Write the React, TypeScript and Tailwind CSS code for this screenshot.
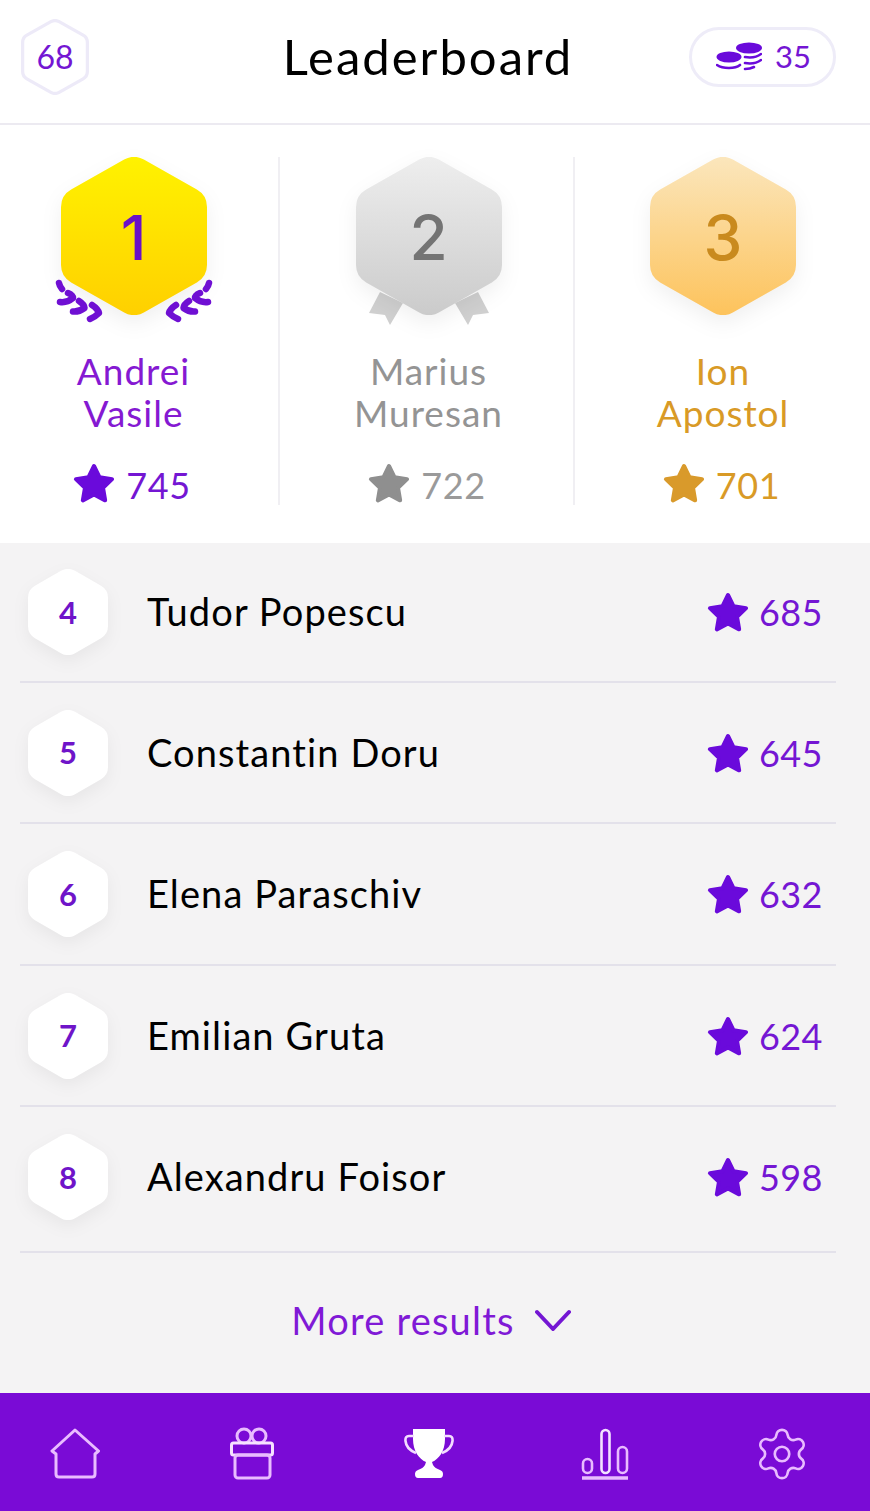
import { Settings } from "lucide-react";

const font = { fontFamily: '"Lato", "Noto Sans", sans-serif' };
const hex = "85,20 138,50 138,108 85,138 32,108 32,50";

function Star({ color, className }: { color: string; className: string }) {
  return (
    <svg viewBox="0 0 44 42" className={className} aria-hidden="true">
      <polygon
        points="22,4 27.58,15.31 40.07,17.13 31.03,25.94 33.17,38.37 22,32.5 10.83,38.37 12.97,25.94 3.93,17.13 16.42,15.31"
        fill={color}
        stroke={color}
        strokeWidth="4"
        strokeLinejoin="round"
      />
    </svg>
  );
}

function Laurel() {
  const leaves = [
    "M10 126 Q10.5 129 13 132",
    "M19 136 Q24 138 24 141 Q18 146 11 145",
    "M30 144 Q35 147 35.5 151 Q30 155 24 154.5",
    "M43 148 Q49 152 50 156 Q46 160 41 162",
  ];
  return (
    <g fill="none" stroke="#6f0fd3" strokeWidth="6.5" strokeLinecap="round" strokeLinejoin="round">
      {leaves.map((d) => (
        <path key={d} d={d} />
      ))}
      <g transform="translate(170,0) scale(-1,1)">
        {leaves.map((d) => (
          <path key={d} d={d} />
        ))}
      </g>
    </g>
  );
}

function Medal({
  id,
  from,
  to,
  rank,
  numberClass,
  ribbon,
  laurel,
}: {
  id: string;
  from: string;
  to: string;
  rank: string;
  numberClass: string;
  ribbon?: boolean;
  laurel?: boolean;
}) {
  return (
    <div className="relative w-[170px] h-[168px] shrink-0">
      <svg viewBox="0 0 170 168" className="absolute inset-0 w-[170px] h-[168px] overflow-visible" aria-hidden="true">
        <defs>
          <linearGradient id={id} gradientUnits="userSpaceOnUse" x1="0" y1="0" x2="0" y2="158">
            <stop offset="0" stopColor={from} />
            <stop offset="1" stopColor={to} />
          </linearGradient>
        </defs>
        {ribbon && (
          <g fill="#d0d0d0">
            <polygon points="36,135 59,146 46,168 41,158 25,156" />
            <polygon points="134,135 111,146 124,168 129,158 145,156" />
          </g>
        )}
        <polygon
          points={hex}
          fill={`url(#${id})`}
          stroke={`url(#${id})`}
          strokeWidth="40"
          strokeLinejoin="round"
          style={{ filter: "drop-shadow(0 8px 10px rgba(0,0,0,0.06))" }}
        />
        {laurel && <Laurel />}
      </svg>
      <div
        style={{ fontFamily: '"Inter", sans-serif' }}
        className={`absolute left-0 right-0 top-[46px] h-[70px] flex items-center justify-center text-[62px] font-medium leading-none ${numberClass}`}
      >
        {rank}
      </div>
    </div>
  );
}

function Podium({
  first,
  last,
  score,
  nameClass,
  scoreClass,
  starColor,
  outerClass,
  medal,
}: {
  first: string;
  last: string;
  score: string;
  nameClass: string;
  scoreClass: string;
  starColor: string;
  outerClass: string;
  medal: React.ReactNode;
}) {
  return (
    <div className={`h-[348px] flex flex-col items-center ${outerClass}`}>
      {medal}
      <div className={`mt-[25px] text-[37px] leading-[42px] tracking-[1px] text-center ${nameClass}`}>
        <div>{first}</div>
        <div>{last}</div>
      </div>
      <div className="mt-[31px] flex items-center h-[50px] gap-[10px] pr-[4px]">
        <Star color={starColor} className="w-[44px] h-[42px] -mt-[4px]" />
        <span className={`text-[36px] tracking-[0.6px] leading-none ${scoreClass}`}>{score}</span>
      </div>
    </div>
  );
}

function Row({ rank, name, score, rowClass }: { rank: string; name: string; score: string; rowClass: string }) {
  return (
    <div className={`flex items-center border-b-2 border-[#e3e1ea] pl-2 ${rowClass}`}>
      <div className="relative w-[80px] h-[86px] shrink-0 flex items-center justify-center">
        <svg viewBox="0 0 80 86" className="absolute inset-0 w-[80px] h-[86px] overflow-visible" aria-hidden="true">
          <polygon
            points="40,14 66,29 66,57 40,72 14,57 14,29"
            fill="#ffffff"
            stroke="#ffffff"
            strokeWidth="28"
            strokeLinejoin="round"
            style={{ filter: "drop-shadow(0 6px 8px rgba(0,0,0,0.05))" }}
          />
        </svg>
        <span className="relative text-[31px] font-bold text-[#6f14c9] leading-none">{rank}</span>
      </div>
      <div className="ml-[39px] -mt-[2px] text-[38px] tracking-[1.1px] text-black leading-none flex-1 whitespace-nowrap">{name}</div>
      <div className="w-[130px] shrink-0 flex items-center gap-[9px]">
        <Star color="#6a0adb" className="w-[44px] h-[42px]" />
        <span className="text-[36px] tracking-[0.4px] leading-none text-[#7416d3]">{score}</span>
      </div>
    </div>
  );
}

function Coins() {
  return (
    <svg viewBox="0 0 46 30" className="w-[46px] h-[30px]" aria-hidden="true">
      <g fill="#6a0adb">
        <ellipse cx="33" cy="6" rx="13" ry="5.5" />
        <ellipse cx="13" cy="15" rx="12.5" ry="5.5" />
      </g>
      <g fill="none" stroke="#6a0adb" strokeWidth="2.6" strokeLinecap="round">
        <path d="M29 15 C35 16 41 15 45 12" />
        <path d="M29 21 C35 22 41 21 45 18" />
        <path d="M29 27 C33 27 36 26 38 25" />
        <path d="M1 23 C7 27 19 27 24 23" />
      </g>
    </svg>
  );
}

function Home() {
  return (
    <svg viewBox="0 0 50 52" className="w-[50px] h-[52px]" fill="none" stroke="#e9bcff" strokeWidth="3" strokeLinejoin="round" aria-hidden="true">
      <path d="M25 2 L48.5 23 L45 26 V46 Q45 49 42 49 H9 Q6 49 6 46 V26 L2 23 Z" />
    </svg>
  );
}

function Gift() {
  return (
    <svg viewBox="0 0 50 54" className="w-[50px] h-[54px]" fill="none" stroke="#e9bcff" strokeWidth="3" strokeLinejoin="round" aria-hidden="true">
      <circle cx="17" cy="9" r="7" />
      <circle cx="32" cy="9" r="7" />
      <rect x="4.5" y="16" width="41" height="12" rx="2" stroke="#f6e2ff" />
      <rect x="8" y="28" width="35" height="23" rx="3" />
    </svg>
  );
}

function Trophy() {
  return (
    <svg viewBox="0 0 50 50" className="w-[50px] h-[50px]" aria-hidden="true">
      <path
        d="M9 0 H41 V10 C41 22 35 30 28 33 L29 36 C30 38 33 40 36 41 Q39 42 39 45 Q39 49 36 49 H14 Q11 49 11 45 Q11 42 14 41 C17 40 20 38 21 36 L22 33 C15 30 9 22 9 10 Z"
        fill="#ffffff"
      />
      <path
        d="M10 7 H5 Q1 7 1.5 12 C2 18 7 22 12 24 M40 7 H45 Q49 7 48.5 12 C48 18 43 22 38 24"
        fill="none"
        stroke="#f3dcff"
        strokeWidth="2.6"
        strokeLinejoin="round"
      />
    </svg>
  );
}

function Chart() {
  return (
    <svg viewBox="0 0 48 52" className="w-[48px] h-[52px]" fill="none" stroke="#e9bcff" strokeWidth="2.6" aria-hidden="true">
      <rect x="2" y="31" width="9" height="14" rx="4.5" />
      <rect x="20.5" y="2" width="8" height="43" rx="4" stroke="#f3e2ff" />
      <rect x="37" y="19" width="9" height="26" rx="4.5" />
      <path d="M1 50 H47" strokeWidth="3.4" />
    </svg>
  );
}

export default function App() {
  const navIcon = "w-[50px] flex items-center justify-center";
  return (
    <div style={font} className="w-full h-[1511px] overflow-hidden bg-white flex flex-col">
      <header className="h-[125px] shrink-0 border-b-2 border-[#eceaf1] flex items-center pl-5 pr-[34px] pb-[10px]">
        <div className="w-[147px] shrink-0">
          <div className="relative w-[70px] h-[76px] flex items-center justify-center">
            <svg viewBox="0 0 70 76" className="absolute inset-0 w-[70px] h-[76px]" aria-hidden="true">
              <polygon points="35,10 59,23.5 59,52.5 35,66 11,52.5 11,23.5" fill="#edeaf8" stroke="#edeaf8" strokeWidth="20" strokeLinejoin="round" />
              <polygon points="35,10 59,23.5 59,52.5 35,66 11,52.5 11,23.5" fill="#ffffff" stroke="#ffffff" strokeWidth="13.5" strokeLinejoin="round" />
            </svg>
            <span className="relative text-[32px] text-[#7416d3] leading-none">68</span>
          </div>
        </div>
        <h1 className="flex-1 text-center text-[49px] font-normal tracking-[2px] text-black leading-none">Leaderboard</h1>
        <div className="w-[147px] h-[60px] shrink-0 rounded-full border-[3px] border-[#eeecf8] flex items-center pl-[24px] gap-[13px]">
          <Coins />
          <span className="text-[31px] leading-none text-[#7416d3]">35</span>
        </div>
      </header>

      <section className="h-[418px] shrink-0 bg-white pt-[32px] flex items-start">
        <Podium
          outerClass="w-[280px] pr-[11px] border-r-2 border-[#f0eff3]"
          first="Andrei"
          last="Vasile"
          score="745"
          nameClass="text-[#8519d2]"
          scoreClass="text-[#7416d3]"
          starColor="#6a0adb"
          medal={<Medal id="gold" from="#fff200" to="#ffd000" rank="1" numberClass="text-[#6a10c8]" laurel />}
        />
        <Podium
          outerClass="w-[295px] pl-[4px] border-r-2 border-[#f0eff3]"
          first="Marius"
          last="Muresan"
          score="722"
          nameClass="text-[#949494]"
          scoreClass="text-[#9a9a9a]"
          starColor="#8f8f8f"
          medal={<Medal id="silver" from="#eeeeee" to="#cbcbcb" rank="2" numberClass="text-[#747474]" ribbon />}
        />
        <Podium
          outerClass="flex-1 pl-[1px]"
          first="Ion"
          last="Apostol"
          score="701"
          nameClass="text-[#d99a26]"
          scoreClass="text-[#d99a26]"
          starColor="#d99a2b"
          medal={<Medal id="bronze" from="#fbe6bc" to="#fdc35c" rank="3" numberClass="text-[#c98a1e]" />}
        />
      </section>

      <main className="flex-1 bg-[#f4f3f4] flex flex-col">
        <div className="pl-5 pr-[34px]">
          <Row rowClass="h-[140px]" rank="4" name="Tudor Popescu" score="685" />
          <Row rowClass="h-[141px]" rank="5" name="Constantin Doru" score="645" />
          <Row rowClass="h-[142px]" rank="6" name="Elena Paraschiv" score="632" />
          <Row rowClass="h-[141px]" rank="7" name="Emilian Gruta" score="624" />
          <Row rowClass="h-[146px] pb-[4px]" rank="8" name="Alexandru Foisor" score="598" />
        </div>
        <div className="flex-1 flex items-center justify-center gap-5 pb-[6px] pr-2 text-[38px] tracking-[1.2px] text-[#8019d6] leading-none">
          <span>More results</span>
          <svg viewBox="0 0 36 22" className="w-9 h-[22px]" fill="none" stroke="#7416d3" strokeWidth="4" strokeLinecap="round" strokeLinejoin="round" aria-hidden="true">
            <path d="M2 3 L18 20 L34 3" />
          </svg>
        </div>
      </main>

      <nav className="h-[118px] shrink-0 bg-[#7a0bd6] flex items-center justify-between pl-[50px] pr-[63px] pt-[4px]">
        <div className={navIcon}><Home /></div>
        <div className={navIcon}><Gift /></div>
        <div className={navIcon}><Trophy /></div>
        <div className={navIcon}><Chart /></div>
        <div className={navIcon}>
          <Settings size={58} strokeWidth={1.1} color="#e9bcff" className="shrink-0" />
        </div>
      </nav>
    </div>
  );
}
